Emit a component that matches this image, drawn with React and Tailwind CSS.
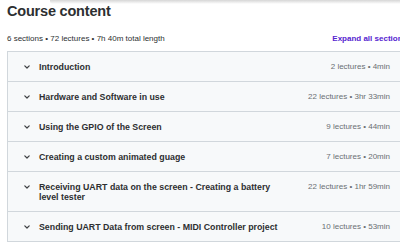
import React from "react";

const sections = [
  { title: "Introduction", meta: "2 lectures • 4min" },
  { title: "Hardware and Software in use", meta: "22 lectures • 3hr 33min" },
  { title: "Using the GPIO of the Screen", meta: "9 lectures • 44min" },
  { title: "Creating a custom animated guage", meta: "7 lectures • 20min" },
  {
    title: (
      <>
        Receiving UART data on the screen - Creating a battery
        <br />
        level tester
      </>
    ),
    meta: "22 lectures • 1hr 59min",
  },
  { title: "Sending UART Data from screen - MIDI Controller project", meta: "10 lectures • 53min" },
];

function Chevron() {
  return (
    <svg width="8" height="10" viewBox="0 0 8 10" className="shrink-0">
      <polyline points="1.8,3.8 4,6 6.2,3.8" fill="none" stroke="#3e4143" strokeWidth="1.2" strokeLinecap="round" strokeLinejoin="round" />
    </svg>
  );
}

export default function App() {
  return (
    <div className="relative w-[400px] h-[242px] overflow-hidden bg-white font-['Liberation_Sans',Arial,sans-serif] text-[#2d2f31]">
      <div className="absolute top-0 left-[50px] right-0 h-[4px] rounded-bl-[3px] bg-gradient-to-b from-[#d6d6d6] to-transparent" />
      <div className="w-[400px] ml-[7px]">
        <h2 className="mt-[2px] text-[14.5px] leading-[18px] font-bold tracking-[-0.2px]">Course content</h2>
        <div className="mt-[13px] flex items-center justify-between text-[8px] leading-[12px]">
          <span className="text-[#2d2f31]">6 sections • 72 lectures • 7h 40m total length</span>
          <span className="font-bold text-[#5624d0] whitespace-nowrap">Expand all sections</span>
        </div>
        <div className="mt-[6px] border border-[#d1d7dc]">
          {sections.map((s, i) => (
            <div
              key={i}
              className={`flex items-start bg-[#f7f9fa] pl-[15px] pr-[16px] pt-[10px] pb-[9px] ${i < sections.length - 1 ? "border-b border-[#d1d7dc]" : ""}`}
            >
              <Chevron />
              <div className="ml-[8px] flex-1 text-[8.8px] leading-[10px] font-bold text-[#2d2f31]">{s.title}</div>
              <div className="ml-[8px] whitespace-nowrap text-[8px] leading-[10px] text-[#6a6f73]">{s.meta}</div>
            </div>
          ))}
        </div>
      </div>
    </div>
  );
}
